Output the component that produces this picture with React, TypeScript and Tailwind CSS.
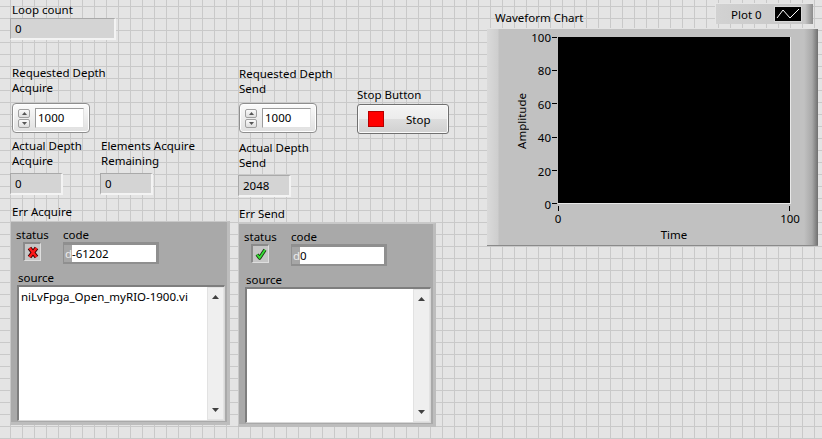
import React from 'react';

function Label({ children, className = '' }: { children: React.ReactNode; className?: string }) {
  return (
    <div className={`text-[11.5px] leading-[15px] text-black whitespace-pre ${className}`}>{children}</div>
  );
}

function Indicator({ value, className = '' }: { value: string; className?: string }) {
  return (
    <div
      className={`h-[22px] bg-[#d4d4d4] border-t border-l border-[#a9a9a9] border-r-2 border-b-2 border-r-[#f3f3f3] border-b-[#f3f3f3] pl-[4px] text-[11.5px] leading-[19px] text-black ${className}`}
    >
      {value}
    </div>
  );
}

function SpinBtn({ up }: { up?: boolean }) {
  return (
    <div className="w-[12px] h-[9px] rounded-[2px] border border-[#a0a0a0] bg-[linear-gradient(to_bottom,#fafafa,#dedede)] flex items-center justify-center">
      <svg width="5" height="3" viewBox="0 0 5 3">
        <path d={up ? 'M0 3 L2.5 0 L5 3 Z' : 'M0 0 L2.5 3 L5 0 Z'} fill="#555" />
      </svg>
    </div>
  );
}

function NumControl({ value }: { value: string }) {
  return (
    <div className="w-[78px] h-[30px] rounded-[4px] border border-[#8e8e8e] bg-[linear-gradient(to_bottom,#fbfbfb,#e0e0e0)] shadow-[inset_0_0_0_1px_#ffffff] flex items-center pl-[5px] gap-[5px]">
      <div className="flex flex-col gap-[1px]">
        <SpinBtn up />
        <SpinBtn />
      </div>
      <div className="w-[49px] h-[20px] bg-white border border-[#9c9c9c] border-b-[#e2e2e2] border-r-[#e2e2e2] pl-[2px] text-[11.5px] leading-[18px] text-black">
        {value}
      </div>
    </div>
  );
}

function StatusIcon({ ok }: { ok: boolean }) {
  return (
    <div className="w-[18px] h-[19px] bg-[#c6c6c6] border-t-2 border-l-2 border-[#8a8a8a] border-r border-b border-r-[#dedede] border-b-[#dedede] flex items-center justify-center">
      {ok ? (
        <svg width="12" height="12" viewBox="0 0 12 12">
          <path d="M2 6.5 L4.6 10 L10 1.8" fill="none" stroke="#1b3a12" strokeWidth="3.6" strokeLinejoin="round" />
          <path d="M2 6.5 L4.6 10 L10 1.8" fill="none" stroke="#35e035" strokeWidth="1.8" strokeLinejoin="round" />
        </svg>
      ) : (
        <svg width="12" height="13" viewBox="0 0 12 13">
          <path d="M2.5 2 L9.5 11 M9.5 2 L2.5 11" fill="none" stroke="#3a0000" strokeWidth="4.4" />
          <path d="M2.5 2 L9.5 11 M9.5 2 L2.5 11" fill="none" stroke="#ff1a1a" strokeWidth="2.4" />
        </svg>
      )}
    </div>
  );
}

function CodeField({ value }: { value: string }) {
  return (
    <div className="w-[96px] h-[22px] flex border-t-[3px] border-l border-r-[3px] border-b-2 border-[#8f8f8f] bg-[#a6a6a6]">
      <span className="w-[8px] pl-[1px] text-[11.5px] leading-[17px] text-[#ececec]">d</span>
      <div className="flex-1 bg-white text-[11.5px] leading-[17px] text-black">{value}</div>
    </div>
  );
}

function Arrow({ up }: { up?: boolean }) {
  return (
    <svg width="7" height="4" viewBox="0 0 7 4">
      <path d={up ? 'M0 4 L3.5 0 L7 4 Z' : 'M0 0 L3.5 4 L7 0 Z'} fill="#404040" />
    </svg>
  );
}

function ErrCluster({ ok, code, source, className = '' }: { ok: boolean; code: string; source: string; className?: string }) {
  return (
    <div
      className={`h-[204px] bg-[#a9a9a9] border-t border-l border-[#c8c8c8] border-r-[3px] border-b-[3px] border-r-[#bdbdbd] border-b-[#bdbdbd] flex flex-col pt-[5px] pl-[5px] pr-[2px] ${className}`}
    >
      <div className="flex">
        <div className="w-[47px]">
          <Label>status</Label>
          <div className="ml-[7px]">
            <StatusIcon ok={ok} />
          </div>
        </div>
        <div>
          <Label>code</Label>
          <CodeField value={code} />
        </div>
      </div>
      <Label className="mt-[6px] ml-[2px]">source</Label>
      <div className="flex-1 mb-[1px] ml-[1px] flex border-t-2 border-l-2 border-[#7e7e7e] border-r border-b border-r-[#d8d8d8] border-b-[#d8d8d8] bg-white">
        <div className="flex-1 pl-[2px] pt-[2px] text-[11.5px] leading-[15px] text-black">{source}</div>
        <div className="w-[17px] bg-[#efefef] border border-[#e2e2e2] flex flex-col justify-between items-center py-[7px]">
          <Arrow up />
          <Arrow />
        </div>
      </div>
    </div>
  );
}

function WaveformChart() {
  const yLabels = ['100', '80', '60', '40', '20', '0'];
  return (
    <div className="w-[331px] flex flex-col">
      <div className="h-[28px] pt-[3px] flex justify-between">
        <Label className="self-end mb-[3px] ml-[8px]">Waveform Chart</Label>
        <div className="mr-[5px] w-[98px] h-[21px] bg-[linear-gradient(to_right,#d2d2d2,#c6c6c6_calc(100%_-_8px),#8c8c8c)] border-t border-l border-[#e6e6e6] flex items-center pl-[15px]">
          <span className="text-[11.5px] leading-[15px] text-black">Plot 0</span>
          <div className="ml-[12px] w-[28px] h-[16px] bg-black border border-[#d8d8d8] flex items-center justify-center">
            <svg width="24" height="12" viewBox="0 0 24 12">
              <path d="M1 10 L7 2 L14 10 L23 1" fill="none" stroke="#ffffff" strokeWidth="1" />
            </svg>
          </div>
        </div>
      </div>
      <div className="h-[218px] pt-[8px] border-t border-[#e4e4e4] border-b border-b-[#8a8a8a] bg-[linear-gradient(to_right,#dadada_0px,#cecece_11px,#c1c1c1_12px,#c1c1c1_calc(100%_-_14px),#a9a9a9_calc(100%_-_6px),#6f6f6f_100%)]">
        <div className="flex">
          <div className="ml-[26px] w-[16px] h-[167px] flex items-center justify-center">
            <span className="[writing-mode:vertical-rl] rotate-180 text-[11.5px] leading-[15px] text-black">Amplitude</span>
          </div>
          <div className="w-[23px] h-[182px] -mt-[7px] -mb-[8px] flex flex-col justify-between items-end pr-[1px]">
            {yLabels.map((l) => (
              <span key={l} className="text-[11.5px] leading-[15px] text-black">
                {l}
              </span>
            ))}
          </div>
          <div className="w-[6px] h-[167px] flex flex-col justify-between">
            {yLabels.map((l) => (
              <div key={l} className="w-[5px] h-[1px] bg-black" />
            ))}
          </div>
          <div className="w-[233px] h-[167px] bg-black border-r border-b border-[#e8e8e8]" />
        </div>
        <div className="ml-[71px] w-[232px]">
          <div className="mt-[2px] h-[5px] flex justify-between">
            <div className="w-[1px] h-full bg-black" />
            <div className="w-[1px] h-full bg-black" />
          </div>
          <div className="-mx-[12px] flex justify-between">
            <span className="w-[24px] text-center text-[11.5px] leading-[15px] text-black">0</span>
            <span className="w-[24px] text-center text-[11.5px] leading-[15px] text-black">100</span>
          </div>
          <div className="mt-[1px] text-center text-[11.5px] leading-[15px] text-black">Time</div>
        </div>
      </div>
    </div>
  );
}

export default function App() {
  return (
    <div className="w-[822px] h-[439px] overflow-hidden flex pl-[10px] font-['Noto_Sans',sans-serif] bg-[#e4e4e4] [background-image:linear-gradient(to_right,#c9c9c9_1px,transparent_1px),linear-gradient(to_bottom,#c9c9c9_1px,transparent_1px)] [background-size:12px_12px] [background-position:10px_6px]">
      {/* column 1: acquire */}
      <div className="w-[227px] flex flex-col">
        <Label className="mt-[2px] ml-[2px]">Loop count</Label>
        <Indicator value="0" className="w-[106px] mt-[1px]" />
        <Label className="mt-[25px] ml-[2px]">{'Requested Depth\nAcquire'}</Label>
        <div className="mt-[8px] ml-[2px]">
          <NumControl value="1000" />
        </div>
        <div className="mt-[5px] flex">
          <div className="w-[90px]">
            <Label className="ml-[2px]">{'Actual Depth\nAcquire'}</Label>
            <Indicator value="0" className="w-[53px] mt-[5px]" />
          </div>
          <div>
            <Label className="ml-[1px]">{'Elements Acquire\nRemaining'}</Label>
            <Indicator value="0" className="w-[53px] mt-[5px]" />
          </div>
        </div>
        <Label className="mt-[9px] ml-[2px]">Err Acquire</Label>
        <ErrCluster ok={false} code="-61202" source="niLvFpga_Open_myRIO-1900.vi" className="w-[220px] mt-[2px]" />
      </div>

      {/* column 2: send */}
      <div className="w-[250px] flex flex-col">
        <div className="mt-[66px] flex">
          <div className="ml-[2px] w-[78px]">
            <Label>{'Requested Depth\nSend'}</Label>
            <div className="mt-[7px]">
              <NumControl value="1000" />
            </div>
          </div>
          <div className="ml-[40px] mt-[21px]">
            <Label>Stop Button</Label>
            <div className="mt-[2px] w-[92px] h-[30px] rounded-[3px] border border-[#707070] bg-[linear-gradient(to_bottom,#f4f4f4_0%,#ececec_50%,#dedede_50%,#d0d0d0_100%)] shadow-[inset_0_0_0_1px_#fafafa] flex items-center pl-[10px]">
              <div className="w-[16px] h-[16px] bg-[#ff0000] border border-[#b40000]" />
              <span className="ml-[22px] text-[11.5px] leading-[15px] text-black">Stop</span>
            </div>
          </div>
        </div>
        <Label className="mt-[6px] ml-[2px]">{'Actual Depth\nSend'}</Label>
        <Indicator value="2048" className="w-[53px] mt-[5px] ml-[1px]" />
        <Label className="mt-[9px] ml-[2px]">Err Send</Label>
        <ErrCluster ok={true} code="0" source="" className="w-[198px] mt-[2px] ml-[1px]" />
      </div>

      {/* column 3: chart */}
      <WaveformChart />
    </div>
  );
}
